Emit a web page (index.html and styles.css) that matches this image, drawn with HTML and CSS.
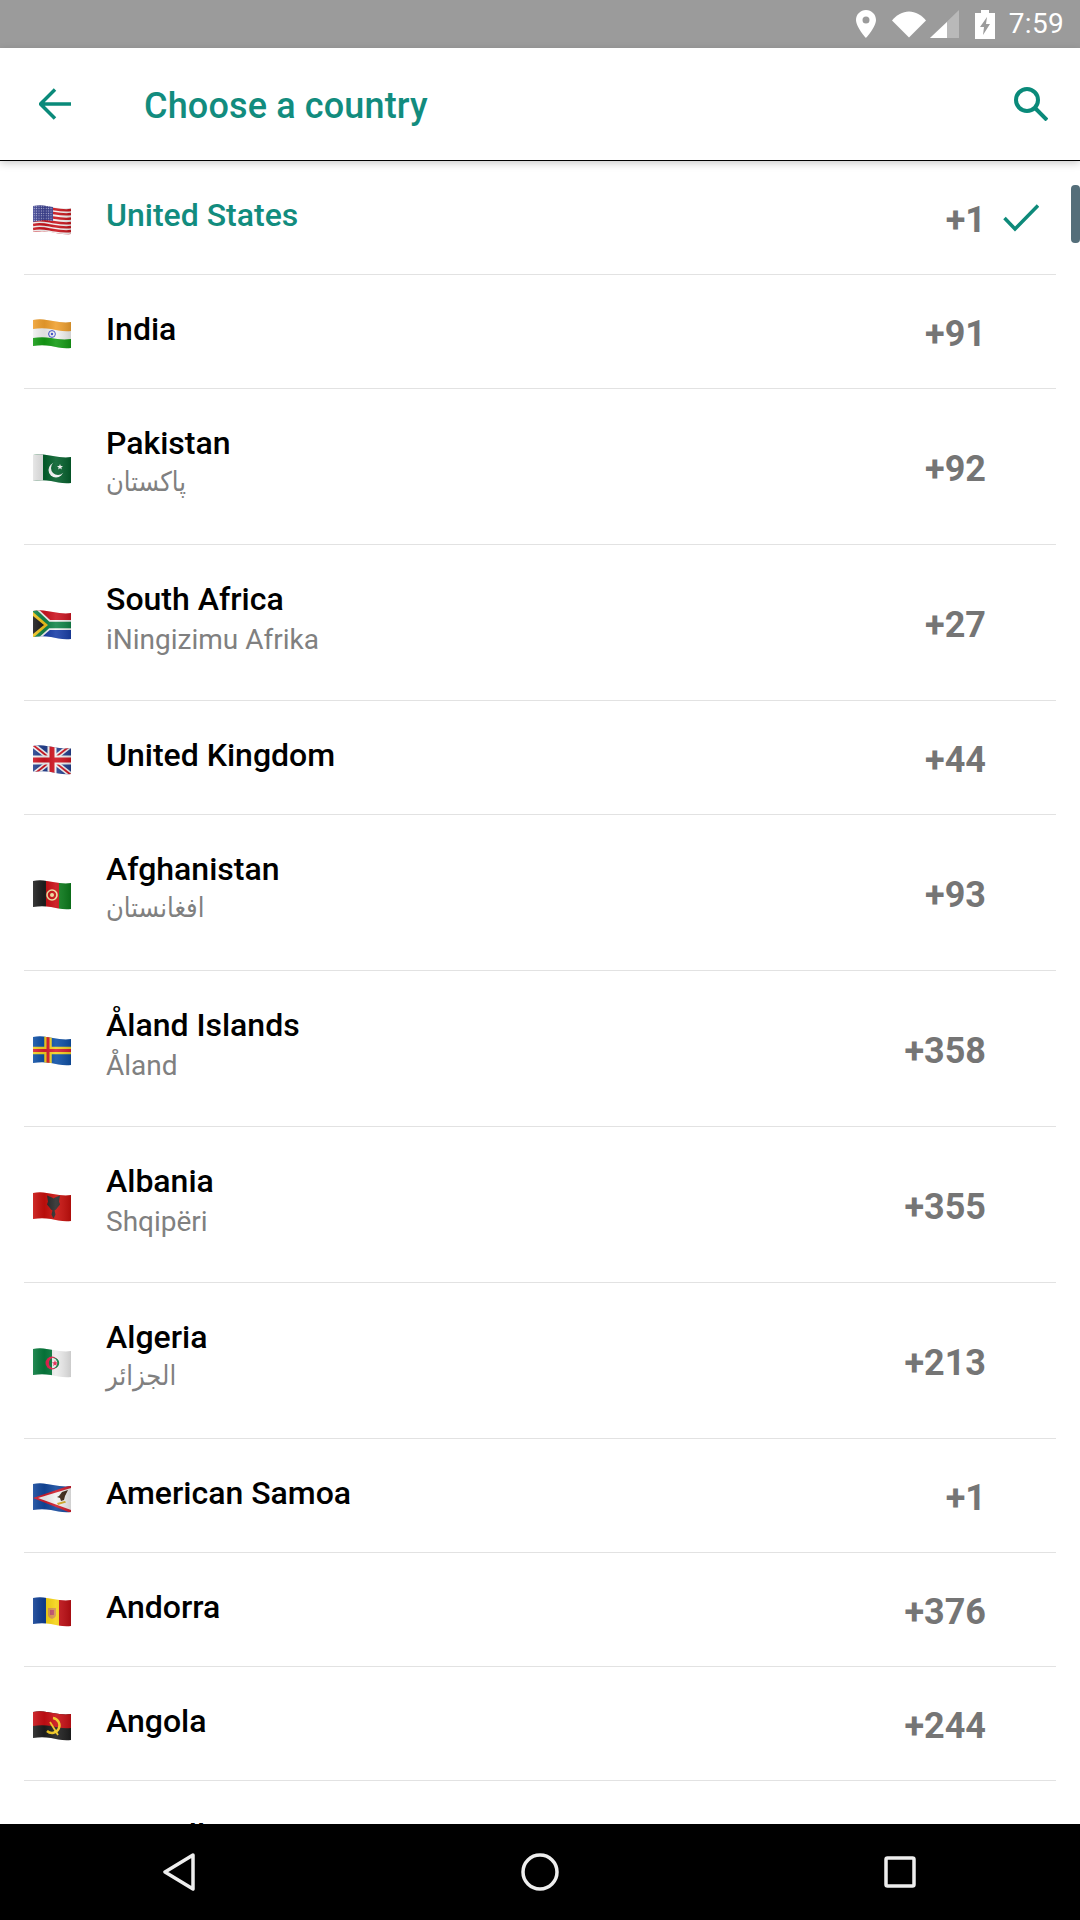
FILE: index.html
```html
<!DOCTYPE html>
<html lang="en">
<head>
    <meta charset="UTF-8">
    <meta name="viewport" content="width=device-width, initial-scale=1.0">
    <title>Choose a country</title>
    <link rel="stylesheet" href="styles.css">
</head>
<body>

    <svg class="defs" aria-hidden="true">
        <defs>
            <clipPath id="wave">
                <path d="M0 1C8-1 14 1 20 2S32 4 38 3V29C30 30 24 28 18 27S6 26 0 27Z"/>
            </clipPath>
            <linearGradient id="shade">
                <stop offset="0" stop-color="#fff" stop-opacity=".12"/>
                <stop offset=".3" stop-color="#000" stop-opacity=".08"/>
                <stop offset=".6" stop-color="#fff" stop-opacity=".1"/>
                <stop offset="1" stop-color="#000" stop-opacity=".14"/>
            </linearGradient>
            <pattern id="stars" width="2.4" height="2.4" patternUnits="userSpaceOnUse">
                <rect width="2.4" height="2.4" fill="#3c4190"/>
                <circle cx="1.2" cy="1.2" r=".55" fill="#c9cbe6"/>
            </pattern>
            <rect id="shadow" width="38" height="30" fill="url(#shade)"/>
        </defs>
    </svg>

    <div class="status">
        <svg class="st-pin" viewBox="0 0 20 28"><path fill-rule="evenodd" d="M10 0C4.500 0 0 4.400 0 10c0 7 10 18 10 18s10-11 10-18C20 4.400 15.500 0 10 0Zm0 13.500a3.500 3.500 0 1 1 0-7 3.500 3.500 0 0 1 0 7Z"/></svg>
        <svg class="st-wifi" viewBox="0 0 34 26"><path d="M0 9C4.500 3.500 10.500 0 17 0s12.500 3.500 17 9L17 26Z"/></svg>
        <svg class="st-signal" viewBox="0 0 29 28"><path fill-opacity=".3" d="M29 0V28H0Z"/><path d="M17 12V28H0Z"/></svg>
        <svg class="st-batt" viewBox="0 0 20 29"><path fill-rule="evenodd" d="M6 0h8v3h6v26H0V3h6ZM12 7 5 17h4l-1 8 7-11h-4Z"/></svg>
        <span class="st-time">7:59</span>
    </div>

    <header class="appbar">
        <svg class="back" viewBox="0 0 32 32"><path d="M16 1.500 1.500 16 16 30.500M2 16h30"/></svg>
        <h1>Choose a country</h1>
        <svg class="search" viewBox="0 0 34 34"><circle cx="13" cy="13" r="11"/><path d="m21 21 12 12"/></svg>
    </header>

    <main class="list">
        <div class="scrollbar"></div>

        <div class="row current">
            <svg class="flag" viewBox="0 0 38 30"><g clip-path="url(#wave)">
                <rect width="38" height="30" fill="#f4f0f0"/>
                <g fill="none" stroke="#c8141c" stroke-width="2.400">
                    <path d="M0 3C8 1 14 3 20 4S32 6 38 5"/><path d="M0 7C8 5 14 7 20 8S32 10 38 9"/>
                    <path d="M0 11.500C8 9.500 14 11.500 20 12.500S32 14.500 38 13.500"/><path d="M0 16C8 14 14 16 20 17S32 19 38 18"/>
                    <path d="M0 20C8 18 14 20 20 21S32 23 38 22"/><path d="M0 24C8 22 14 24 20 25S32 27 38 26"/>
                    <path d="M0 28C8 26 14 28 20 29S32 31 38 30"/>
                </g>
                <path fill="url(#stars)" d="M0 0H20V16C14 15 8 15 0 17Z"/>
                <use href="#shadow"/>
            </g></svg>
            <div class="names"><div class="name">United States</div></div>
            <div class="code">+1</div>
            <svg class="check" viewBox="0 0 36 28"><path d="M1.500 14 12 25 35 1.500"/></svg>
        </div>

        <div class="row">
            <svg class="flag" viewBox="0 0 38 30"><g clip-path="url(#wave)">
                <rect width="38" height="30" fill="#f2f2f2"/>
                <path fill="#f0a02e" d="M0 0H38V12C30 13 24 11 18 10S6 9 0 10Z"/>
                <path fill="#149c14" d="M0 19C6 18 12 18 18 19S30 21 38 20V30H0Z"/>
                <circle cx="19" cy="15" r="3.400" fill="none" stroke="#3a4bc8" stroke-width="1"/>
                <circle cx="19" cy="15" r="1.200" fill="#3a4bc8"/>
                <use href="#shadow"/>
            </g></svg>
            <div class="names"><div class="name">India</div></div>
            <div class="code">+91</div>
        </div>

        <div class="row two">
            <svg class="flag" viewBox="0 0 38 30"><g clip-path="url(#wave)">
                <rect width="38" height="30" fill="#04602c"/>
                <rect width="10" height="30" fill="#e4e4e4"/>
                <circle cx="23" cy="16" r="7.500" fill="#f4f4f4"/>
                <circle cx="25" cy="14" r="7" fill="#04602c"/>
                <path fill="#f4f4f4" d="m27 10 .8 2 2.200.1-1.700 1.300.6 2.100-1.900-1.200-1.900 1.200.6-2.100-1.700-1.300 2.200-.1Z"/>
                <use href="#shadow"/>
            </g></svg>
            <div class="names"><div class="name">Pakistan</div><div class="sub ar" dir="rtl">پاکستان</div></div>
            <div class="code">+92</div>
        </div>

        <div class="row two">
            <svg class="flag" viewBox="0 0 38 30"><g clip-path="url(#wave)">
                <rect width="38" height="15" fill="#cc1420"/>
                <rect y="15" width="38" height="15" fill="#1a3fa8"/>
                <path fill="none" stroke="#f2f2f2" stroke-width="10" d="M-2-1 15 15-2 30M15 15H38"/>
                <path fill="none" stroke="#12854a" stroke-width="6.500" d="M-2-1 15 15-2 30M15 15H38"/>
                <path fill="#f2c41c" d="M0 2 15 15 0 28Z"/>
                <path fill="#1c1c1c" d="M0 6 11 15 0 24Z"/>
                <use href="#shadow"/>
            </g></svg>
            <div class="names"><div class="name">South Africa</div><div class="sub">iNingizimu Afrika</div></div>
            <div class="code">+27</div>
        </div>

        <div class="row">
            <svg class="flag" viewBox="0 0 38 30"><g clip-path="url(#wave)">
                <rect width="38" height="30" fill="#24408e"/>
                <path stroke="#f2f2f2" stroke-width="5" d="M0 0 38 30M38 0 0 30"/>
                <path stroke="#cf1420" stroke-width="1.800" d="M0 0 38 30M38 0 0 30"/>
                <path stroke="#f2f2f2" stroke-width="9" d="M19 0V30M0 15H38"/>
                <path stroke="#cf1420" stroke-width="5" d="M19 0V30M0 15H38"/>
                <use href="#shadow"/>
            </g></svg>
            <div class="names"><div class="name">United Kingdom</div></div>
            <div class="code">+44</div>
        </div>

        <div class="row two">
            <svg class="flag" viewBox="0 0 38 30"><g clip-path="url(#wave)">
                <rect width="13" height="30" fill="#1e1e1e"/>
                <rect x="13" width="13" height="30" fill="#c80e14"/>
                <rect x="26" width="12" height="30" fill="#0c7c1c"/>
                <circle cx="19" cy="15" r="5" fill="none" stroke="#f0e0a0" stroke-width="1.600"/>
                <circle cx="19" cy="15" r="2" fill="#f0e0a0"/>
                <use href="#shadow"/>
            </g></svg>
            <div class="names"><div class="name">Afghanistan</div><div class="sub ar" dir="rtl">افغانستان</div></div>
            <div class="code">+93</div>
        </div>

        <div class="row two">
            <svg class="flag" viewBox="0 0 38 30"><g clip-path="url(#wave)">
                <rect width="38" height="30" fill="#0e50a6"/>
                <path stroke="#f4d020" stroke-width="7.500" d="M15 0V30M0 14.500H38"/>
                <path stroke="#d81e30" stroke-width="3" d="M15 0V30M0 14.500H38"/>
                <use href="#shadow"/>
            </g></svg>
            <div class="names"><div class="name">Åland Islands</div><div class="sub">Åland</div></div>
            <div class="code">+358</div>
        </div>

        <div class="row two">
            <svg class="flag" viewBox="0 0 38 30"><g clip-path="url(#wave)">
                <rect width="38" height="30" fill="#c80f0c"/>
                <path fill="#2a2a2a" d="M19 4l1.500 2.500 1.500-1 5-2-1 6 1 3-2.500 3-1.500 2-1.500 1 1 4-2 4-2-4 1-4-1.500-1-1.500-2-2.500-3 1-3-1-6 5 2 1.500 1Z"/>
                <use href="#shadow"/>
            </g></svg>
            <div class="names"><div class="name">Albania</div><div class="sub">Shqipëri</div></div>
            <div class="code">+355</div>
        </div>

        <div class="row two">
            <svg class="flag" viewBox="0 0 38 30"><g clip-path="url(#wave)">
                <rect width="38" height="30" fill="#ececec"/>
                <rect width="19" height="30" fill="#067a3c"/>
                <circle cx="19" cy="15" r="6.500" fill="#e0204c"/>
                <circle cx="21" cy="15" r="5.200" fill="#067a3c"/>
                <path fill="#ececec" d="M19 9.800a5.200 5.200 0 0 1 0 10.400Z"/>
                <path fill="#e0204c" d="m22 12 .8 2.200 2.200.2-1.700 1.300.6 2.300-1.900-1.300-1.900 1.300.6-2.300-1.700-1.300 2.200-.2Z"/>
                <use href="#shadow"/>
            </g></svg>
            <div class="names"><div class="name">Algeria</div><div class="sub ar" dir="rtl">الجزائر</div></div>
            <div class="code">+213</div>
        </div>

        <div class="row">
            <svg class="flag" viewBox="0 0 38 30"><g clip-path="url(#wave)">
                <rect width="38" height="30" fill="#12479c"/>
                <path fill="#d01c2c" d="M38 2V30L0 15Z"/>
                <path fill="#f2f2f2" d="M38 5V27L5 15Z"/>
                <path fill="#3a2414" d="M35 7 29 9l-3 4-2 1 3 1 1 3 3-1 1-4Z"/>
                <path fill="#d4a820" d="M24 20l8-2 1 1.500-8 2.500Z"/>
                <use href="#shadow"/>
            </g></svg>
            <div class="names"><div class="name">American Samoa</div></div>
            <div class="code">+1</div>
        </div>

        <div class="row">
            <svg class="flag" viewBox="0 0 38 30"><g clip-path="url(#wave)">
                <rect width="13" height="30" fill="#0f3f94"/>
                <rect x="13" width="13" height="30" fill="#f6d414"/>
                <rect x="26" width="12" height="30" fill="#c00e14"/>
                <path fill="#d8944c" d="M15 11h8v7c0 2-2 3-4 4-2-1-4-2-4-4Z"/>
                <path fill="#c0506a" d="M17 13h4v5h-4Z"/>
                <use href="#shadow"/>
            </g></svg>
            <div class="names"><div class="name">Andorra</div></div>
            <div class="code">+376</div>
        </div>

        <div class="row">
            <svg class="flag" viewBox="0 0 38 30"><g clip-path="url(#wave)">
                <rect width="38" height="30" fill="#1e1e1e"/>
                <path fill="#c80e14" d="M0 0H38V17C30 18 24 16 18 15S6 14 0 15Z"/>
                <path fill="none" stroke="#f2c81c" stroke-width="2.400" d="M20 7a7.500 7.500 0 1 1-6 13"/>
                <path stroke="#f2c81c" stroke-width="1.800" d="M17 11 25 24"/>
                <use href="#shadow"/>
            </g></svg>
            <div class="names"><div class="name">Angola</div></div>
            <div class="code">+244</div>
        </div>

        <div class="row">
            <div class="flag"></div>
            <div class="names"><div class="name">Anguilla</div></div>
            <div class="code">+1</div>
        </div>
    </main>

    <nav class="navbar">
        <svg class="nav-back" viewBox="0 0 32 38"><path d="M30 2 2 19 30 36Z"/></svg>
        <svg class="nav-home" viewBox="0 0 38 38"><circle cx="19" cy="19" r="17"/></svg>
        <svg class="nav-recent" viewBox="0 0 32 32"><rect x="2" y="2" width="28" height="28" rx="1.500"/></svg>
    </nav>

</body>
</html>
```

FILE: styles.css
```css
* {
    padding: 0;
    margin: 0;
    box-sizing: border-box;
}

html,
body {
    height: 1920px;
    overflow: hidden;
    background-color: #fff;
}

body {
    display: flex;
    flex-direction: column;
    font-family: Roboto, "DejaVu Sans", sans-serif;
}

.defs {
    display: block;
    width: 0;
    height: 0;
}

/* status bar */
.status {
    height: 48px;
    flex: none;
    background-color: #9b9b9b;
    display: flex;
    align-items: center;
    justify-content: flex-end;
    padding-right: 16px;
}

.status svg {
    fill: #fff;
    display: block;
}

.st-pin {
    width: 20px;
    height: 28px;
    margin-right: 16px;
}

.st-wifi {
    width: 34px;
    height: 27px;
    margin-right: 4px;
}

.st-signal {
    width: 29px;
    height: 28px;
    margin-right: 16px;
}

.st-batt {
    width: 20px;
    height: 29px;
    margin-right: 14px;
}

.st-time {
    color: #fff;
    font-size: 28px;
    line-height: 28px;
    letter-spacing: 0.3px;
}

/* toolbar */
.appbar {
    height: 112px;
    flex: none;
    position: relative;
    z-index: 2;
    background-color: #fff;
    display: flex;
    align-items: center;
    padding: 0 32px 0 39px;
    box-shadow: 0 1px 0 #000, 0 3px 8px rgba(0, 0, 0, 0.22);
}

.appbar h1 {
    flex: 1;
    font-size: 36px;
    font-weight: 500;
    letter-spacing: 0.15px;
    color: #128c7e;
    margin: 4px 0 0 73px;
}

.back {
    width: 32px;
    height: 32px;
    fill: none;
    stroke: #0a8a7a;
    stroke-width: 3.500;
}

.search {
    width: 34px;
    height: 34px;
    fill: none;
    stroke: #0a8a7a;
    stroke-width: 4;
}

/* list */
.list {
    flex: 1;
    min-height: 0;
    overflow: hidden;
    position: relative;
    padding: 1px 24px 0;
}

.scrollbar {
    position: absolute;
    top: 25px;
    right: 0;
    width: 9px;
    height: 58px;
    border-radius: 4px;
    background-color: #546e7a;
}

.row {
    height: 114px;
    display: flex;
    align-items: center;
    border-bottom: 1px solid #e2e2e2;
    flex: none;
}

.row.two {
    height: 156px;
}

.flag {
    width: 38px;
    height: 30px;
    margin: 4px 35px 0 9px;
    flex: none;
}

.names {
    flex: 1;
    margin-top: -6px;
}

.name {
    font-size: 32px;
    line-height: 40px;
    font-weight: 500;
    color: #000;
}

.sub {
    font-size: 28px;
    line-height: 40px;
    margin-top: 1px;
    color: #808080;
    text-align: left;
}

.sub.ar {
    font-family: "DejaVu Sans Condensed", "DejaVu Sans", sans-serif;
    font-size: 27px;
    line-height: 36px;
    margin-bottom: 4px;
}

.code {
    font-size: 36px;
    font-weight: 700;
    color: #757575;
    margin: 4px 70px 0 0;
}

.current .name {
    color: #128c7e;
}

.current .code {
    margin-right: 17px;
}

.check {
    width: 36px;
    height: 28px;
    margin-right: 17px;
    fill: none;
    stroke: #0e8a7a;
    stroke-width: 3.500;
}

/* bottom nav */
.navbar {
    height: 96px;
    flex: none;
    position: relative;
    background-color: #000;
    display: flex;
    align-items: center;
    padding-left: 163px;
}

.navbar svg {
    fill: none;
    stroke: #eee;
    stroke-width: 3.500;
    stroke-linejoin: round;
}

.nav-back {
    width: 32px;
    height: 38px;
}

.nav-home {
    width: 38px;
    height: 38px;
    margin-left: 326px;
}

.nav-recent {
    width: 32px;
    height: 32px;
    margin-left: 325px;
}
```
